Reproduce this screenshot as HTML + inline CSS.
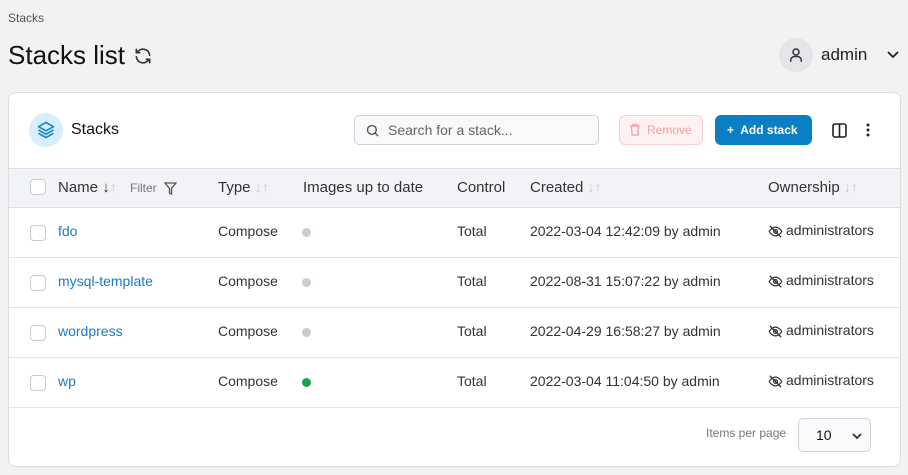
<!DOCTYPE html><html><head><style>
*{box-sizing:border-box;margin:0;padding:0}
body{width:908px;height:475px;background:#f2f2f3;font-family:"Liberation Sans",sans-serif;color:#111;position:relative;overflow:hidden;font-size:13px}
.a{position:absolute}
.card{left:8px;top:92px;width:893px;height:375px;background:#fff;border:1px solid #dadde2;border-radius:8px;overflow:hidden}
.th{left:0;top:75px;width:893px;height:40px;background:#f2f3f7;border-top:1px solid #dde0e4;border-bottom:1px solid #dde0e4}
.row{left:0;width:893px;height:50px;border-bottom:1px solid #e0e2e6}
.cb{width:16px;height:16px;border:1px solid #c8ccd2;border-radius:4px;background:#fff}
.c{color:#333;font-size:14px;white-space:nowrap}
.h{color:#333;font-size:15px}
.s{color:#c4c8cf;font-size:14px}
.dot{width:9px;height:9px;border-radius:50%;background:#c9ccd4}
a{color:#1b7bbd;text-decoration:none}
.eo{position:absolute;left:0;top:2px}
.own{padding-left:18px}
</style></head><body>
<div class="a" style="left:8px;top:11px;font-size:12px;color:#555">Stacks</div>
<div class="a" style="left:8px;top:40px;font-size:26px;color:#111">Stacks list</div>
<svg class="a" style="left:133px;top:46px" width="20" height="20" viewBox="0 0 24 24" fill="none" stroke="#333" stroke-width="2" stroke-linecap="round"><path d="M20 11A8 8 0 0 0 5 8M4 4v4h4M4 13a8 8 0 0 0 15 3M20 20v-4h-4"/></svg>
<div class="a" style="left:779px;top:38px;width:34px;height:34px;border-radius:50%;background:#e4e5e9"></div>
<svg class="a" style="left:787px;top:46px" width="18" height="18" viewBox="0 0 24 24" fill="none" stroke="#333" stroke-width="2"><circle cx="12" cy="8" r="4"/><path d="M5 21v-2a5 5 0 0 1 5-5h4a5 5 0 0 1 5 5v2"/></svg>
<div class="a" style="left:821px;top:45px;font-size:17px;color:#222">admin</div>
<svg class="a" style="left:886px;top:49px" width="14" height="12" viewBox="0 0 14 12" fill="none" stroke="#222" stroke-width="1.8"><path d="M2 3l5 5 5-5"/></svg>
<div class="a card">
<div class="a" style="left:20px;top:20px;width:34px;height:34px;border-radius:50%;background:#d9eefc"></div>
<svg class="a" style="left:27px;top:27px" width="20" height="20" viewBox="0 0 24 24" fill="none" stroke="#1b86c9" stroke-width="2" stroke-linejoin="round"><path d="M12 3l9 5-9 5-9-5z"/><path d="M3 12l9 5 9-5"/><path d="M3 16l9 5 9-5"/></svg>
<div class="a" style="left:62px;top:28px;font-size:16px">Stacks</div>
<div class="a" style="left:345px;top:22px;width:245px;height:30px;border:1px solid #cfd3d9;border-radius:5px;background:#f8f9fb"></div>
<svg class="a" style="left:356px;top:30px" width="15" height="15" viewBox="0 0 24 24" fill="none" stroke="#555" stroke-width="2.2"><circle cx="11" cy="11" r="7"/><path d="M16 16l5 5"/></svg>
<div class="a" style="left:379px;top:29px;font-size:14px;color:#666">Search for a stack...</div>
<div class="a" style="left:610px;top:22px;width:84px;height:30px;border:1px solid #f7cfcf;border-radius:6px;background:#fdf1f1;color:#f0a3a3;font-size:12px;padding:7px 0 0 27px">Remove</div>
<svg class="a" style="left:620px;top:30px" width="12" height="13" viewBox="0 0 12 13" fill="none" stroke="#f0a3a3" stroke-width="1.3"><path d="M1 3h10M4 3V1.5h4V3M2.5 3l.5 9h6l.5-9"/></svg>
<div class="a" style="left:706px;top:22px;width:97px;height:30px;border-radius:6px;background:#0a7fc6;color:#fff;font-size:12px;font-weight:bold;padding:8px 0 0 12px">+&nbsp; Add stack</div>
<svg class="a" style="left:823px;top:30px" width="15" height="15" viewBox="0 0 15 15" fill="none" stroke="#222" stroke-width="1.6"><rect x="1" y="1" width="13" height="13" rx="2"/><path d="M7.5 1v13"/></svg>
<svg class="a" style="left:857px;top:30px" width="4" height="14"><circle cx="2" cy="2" r="1.5" fill="#222"/><circle cx="2" cy="7" r="1.5" fill="#222"/><circle cx="2" cy="12" r="1.5" fill="#222"/></svg>
<div class="a th">
<div class="a cb" style="left:21px;top:10px"></div>
<div class="a h" style="left:49px;top:10px">Name <span style="color:#333">↓</span><span class="s">↑</span></div>
<div class="a" style="left:121px;top:12px;font-size:12px;color:#777">Filter</div>
<svg class="a" style="left:155px;top:13px" width="13" height="13" viewBox="0 0 13 13" fill="none" stroke="#555" stroke-width="1.3"><path d="M1 1h11L7.5 6.5V12l-2-1V6.5z"/></svg>
<div class="a h" style="left:209px;top:10px">Type <span class="s">↓↑</span></div>
<div class="a h" style="left:294px;top:10px">Images up to date</div>
<div class="a h" style="left:448px;top:10px">Control</div>
<div class="a h" style="left:521px;top:10px">Created <span class="s">↓↑</span></div>
<div class="a h" style="left:759px;top:10px">Ownership <span class="s">↓↑</span></div>
</div>
<div class="a row" style="top:115px"><div class="a cb" style="left:21px;top:17px"></div><a class="a c" style="left:49px;top:15px;color:#1b7bbd">fdo</a><div class="a c" style="left:209px;top:15px">Compose</div><div class="a dot" style="left:293px;top:20px"></div><div class="a c" style="left:448px;top:15px">Total</div><div class="a c" style="left:521px;top:15px">2022-03-04 12:42:09 by admin</div><div class="a c own" style="left:759px;top:14px"><svg class="eo" width="15" height="15" viewBox="0 0 24 24" fill="none" stroke="#333" stroke-width="2"><path d="M2 12s4-7 10-7 10 7 10 7-4 7-10 7S2 12 2 12z"/><circle cx="12" cy="12" r="3"/><path d="M3 3l18 18"/></svg>administrators</div></div>
<div class="a row" style="top:165px"><div class="a cb" style="left:21px;top:17px"></div><a class="a c" style="left:49px;top:15px;color:#1b7bbd">mysql-template</a><div class="a c" style="left:209px;top:15px">Compose</div><div class="a dot" style="left:293px;top:20px"></div><div class="a c" style="left:448px;top:15px">Total</div><div class="a c" style="left:521px;top:15px">2022-08-31 15:07:22 by admin</div><div class="a c own" style="left:759px;top:14px"><svg class="eo" width="15" height="15" viewBox="0 0 24 24" fill="none" stroke="#333" stroke-width="2"><path d="M2 12s4-7 10-7 10 7 10 7-4 7-10 7S2 12 2 12z"/><circle cx="12" cy="12" r="3"/><path d="M3 3l18 18"/></svg>administrators</div></div>
<div class="a row" style="top:215px"><div class="a cb" style="left:21px;top:17px"></div><a class="a c" style="left:49px;top:15px;color:#1b7bbd">wordpress</a><div class="a c" style="left:209px;top:15px">Compose</div><div class="a dot" style="left:293px;top:20px"></div><div class="a c" style="left:448px;top:15px">Total</div><div class="a c" style="left:521px;top:15px">2022-04-29 16:58:27 by admin</div><div class="a c own" style="left:759px;top:14px"><svg class="eo" width="15" height="15" viewBox="0 0 24 24" fill="none" stroke="#333" stroke-width="2"><path d="M2 12s4-7 10-7 10 7 10 7-4 7-10 7S2 12 2 12z"/><circle cx="12" cy="12" r="3"/><path d="M3 3l18 18"/></svg>administrators</div></div>
<div class="a row" style="top:265px"><div class="a cb" style="left:21px;top:17px"></div><a class="a c" style="left:49px;top:15px;color:#1b7bbd">wp</a><div class="a c" style="left:209px;top:15px">Compose</div><div class="a dot" style="left:293px;top:20px;background:#16a34a"></div><div class="a c" style="left:448px;top:15px">Total</div><div class="a c" style="left:521px;top:15px">2022-03-04 11:04:50 by admin</div><div class="a c own" style="left:759px;top:14px"><svg class="eo" width="15" height="15" viewBox="0 0 24 24" fill="none" stroke="#333" stroke-width="2"><path d="M2 12s4-7 10-7 10 7 10 7-4 7-10 7S2 12 2 12z"/><circle cx="12" cy="12" r="3"/><path d="M3 3l18 18"/></svg>administrators</div></div>
<div class="a" style="left:697px;top:333px;font-size:12px;color:#777">Items per page</div>
<div class="a" style="left:789px;top:325px;width:73px;height:34px;border:1px solid #cfd3d9;border-radius:5px;background:#f8f9fb;font-size:14px;padding:8px 0 0 17px">10</div>
<svg class="a" style="left:843px;top:339px" width="10" height="8" viewBox="0 0 10 8" fill="none" stroke="#333" stroke-width="1.8"><path d="M1 2l4 4 4-4"/></svg>
</div>
</body></html>
